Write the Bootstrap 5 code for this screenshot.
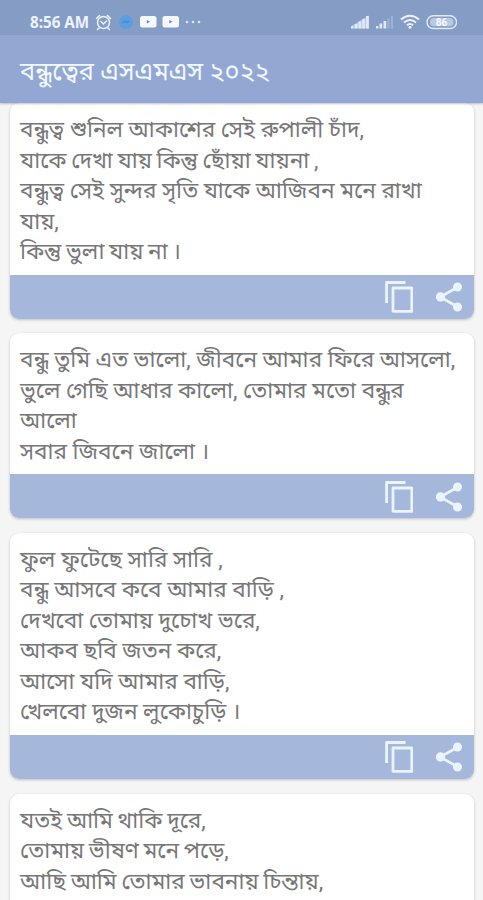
<!DOCTYPE html>
<html lang="bn">
<head>
<meta charset="utf-8">
<meta name="viewport" content="width=device-width, initial-scale=1">
<title>বন্ধুত্বের এসএমএস ২০২২</title>
<link href="https://cdn.jsdelivr.net/npm/bootstrap@5.3.0/dist/css/bootstrap.min.css" rel="stylesheet">
<style>
html, body { height: 900px; overflow: hidden; }
body { background: #f5f5f5; font-family: Roboto, "Noto Sans Bengali", "Noto Sans", sans-serif; color: #777; }
.status { height: 35px; background: #859dc5; padding: 9px 26px 0 30px; color: #edf3fc; }
.clock { font: 700 15.2px/26px "Noto Sans", sans-serif; width: 59px; white-space: nowrap; }
.titlebar { height: 68px; background: #92a8d3; padding: 2px 20px 0; box-shadow: 0 1px 2px rgba(60,80,120,.35); position: relative; z-index: 2; }
.titlebar h1 { font-size: 25.4px; font-weight: 400; color: #f3f8ff; line-height: 68px; white-space: nowrap; }
.feed { padding: 0 9px 0 10px; gap: 14.5px; }
.msg { border: 0; border-radius: 9px; box-shadow: 0 1px 3px rgba(0,0,0,.22); overflow: hidden; flex: none; }
.msg-text { padding: 12px 10px 7px; font-size: 22.6px; line-height: 30.5px; white-space: nowrap; }
.snug { word-spacing: -.9px; }
.msg-bar { height: 44.2px; background: #a5b7da; padding: 1px 11px 0 0; gap: 22px; color: #e9f4ff; }
</style>
<script src="https://cdn.jsdelivr.net/npm/bootstrap@5.3.0/dist/js/bootstrap.bundle.min.js"></script>
</head>
<body>
<svg class="d-none">
  <symbol id="copy" viewBox="0 0 30 34"><path d="M3.600 23V2.500H22.500M10 8H28.800V31.300H10Z" fill="none" stroke="currentColor" stroke-width="2.800" stroke-linejoin="round"/></symbol>
  <symbol id="share" viewBox="0 0 28 30"><path d="M23 5L5 15L23 25" fill="none" stroke="currentColor" stroke-width="2.600"/><g fill="currentColor"><circle cx="22.500" cy="5" r="4.500"/><circle cx="5.500" cy="15" r="4.700"/><circle cx="22.500" cy="25" r="4.500"/></g></symbol>
</svg>
<header>
  <div class="status d-flex">
    <span class="clock">8:56 AM</span>
    <svg width="120" height="26" viewBox="89 9 120 26">
      <g fill="none" stroke="#edf3fc" stroke-width="1.500" stroke-linecap="round"><circle cx="103.500" cy="22.500" r="6"/><path d="M96.500 18.500l3-3M110.500 18.500l-3-3M101 21.500l2.500 2.500l3-3M99 28l-1.500 1.500M108 28l1.500 1.500"/></g>
      <circle cx="126" cy="22" r="7" fill="#5b9fe0"/><path d="M122.500 23l2.500-2l2 1.600l2.500-2" fill="none" stroke="#478bd0" stroke-width="1.500"/>
      <g fill="#f5f8ff"><rect x="140" y="16" width="16.500" height="11.500" rx="2.500"/><rect x="162.500" y="16" width="16.500" height="11.500" rx="2.500"/></g>
      <path d="M146.800 20l3.200 1.800l-3.200 1.800zM169.300 20l3.200 1.800l-3.200 1.800z" fill="#7b8798"/>
      <g fill="#dbe6f6"><circle cx="187" cy="22" r="1.300"/><circle cx="193" cy="22" r="1.300"/><circle cx="199" cy="22" r="1.300"/></g>
    </svg>
    <svg class="ms-auto" width="108" height="26" viewBox="349 9 108 26">
      <g fill="#dfe9f8"><path d="M351 28.500v-2.300L369 15.500v13z" opacity=".55"/><path d="M351 26h2.300v2.500H351zM354.800 24h2.700v4.500h-2.700zM358.500 21.500h2.700v7h-2.700zM362.200 19h2.700v9.500h-2.700zM366 16h2.800v12.500H366z"/><path d="M376 26h2.300v2.500H376zM379.500 23.500h2.700v5h-2.700zM383.500 21h2.700v7.500h-2.700z"/><path d="M387.500 18.500h2v10h-2zM391 16h2v12.500h-2z" opacity=".3"/></g>
      <g fill="none" stroke="#edf3fc" stroke-width="2"><path d="M401 19.500Q410 12 419 19.500M404 22.500Q410 17.500 416 22.500M407 25.300Q410 22.800 413 25.300"/></g><circle cx="410" cy="27.300" r="1.500" fill="#edf3fc"/>
      <rect x="427" y="15.800" width="29.500" height="12.700" rx="6.300" fill="none" stroke="#dfe9f8" stroke-width="1.400"/><rect x="430" y="18" width="23.500" height="8.300" rx="4" fill="#b9c9e2"/>
      <text x="441.500" y="26" text-anchor="middle" font-family="Roboto" font-weight="700" font-size="10" fill="#f6faff">86</text>
    </svg>
  </div>
  <div class="titlebar"><h1 class="m-0">বন্ধুত্বের এসএমএস ২০২২</h1></div>
</header>
<main class="feed d-flex flex-column">
  <article class="msg card">
    <div class="msg-text">বন্ধুত্ব শুনিল আকাশের সেই রুপালী চাঁদ,<br><span class="snug">যাকে দেখা যায় কিন্তু ছোঁয়া যায়না ,</span><br>বন্ধুত্ব সেই সুন্দর সৃতি যাকে আজিবন মনে রাখা<br>যায়,<br><span class="snug">কিন্তু ভুলা যায় না ।</span></div>
    <div class="msg-bar d-flex align-items-center justify-content-end"><svg width="30" height="34"><use href="#copy"/></svg><svg width="28" height="30"><use href="#share"/></svg></div>
  </article>
  <article class="msg card">
    <div class="msg-text">বন্ধু তুমি এত ভালো, জীবনে আমার ফিরে আসলো,<br>ভুলে গেছি আধার কালো, তোমার মতো বন্ধুর<br>আলো<br>সবার জিবনে জালো ।</div>
    <div class="msg-bar d-flex align-items-center justify-content-end"><svg width="30" height="34"><use href="#copy"/></svg><svg width="28" height="30"><use href="#share"/></svg></div>
  </article>
  <article class="msg card">
    <div class="msg-text">ফুল ফুটেছে সারি সারি ,<br>বন্ধু আসবে কবে আমার বাড়ি ,<br>দেখবো তোমায় দুচোখ ভরে,<br>আকব ছবি জতন করে,<br>আসো যদি আমার বাড়ি,<br>খেলবো দুজন লুকোচুড়ি ।</div>
    <div class="msg-bar d-flex align-items-center justify-content-end"><svg width="30" height="34"><use href="#copy"/></svg><svg width="28" height="30"><use href="#share"/></svg></div>
  </article>
  <article class="msg card">
    <div class="msg-text"><span class="snug">যতই আমি থাকি দূরে,<br>তোমায় ভীষণ মনে পড়ে,<br>আছি আমি তোমার ভাবনায় চিন্তায়,</span><br>&nbsp;</div>
  </article>
</main>
</body>
</html>
